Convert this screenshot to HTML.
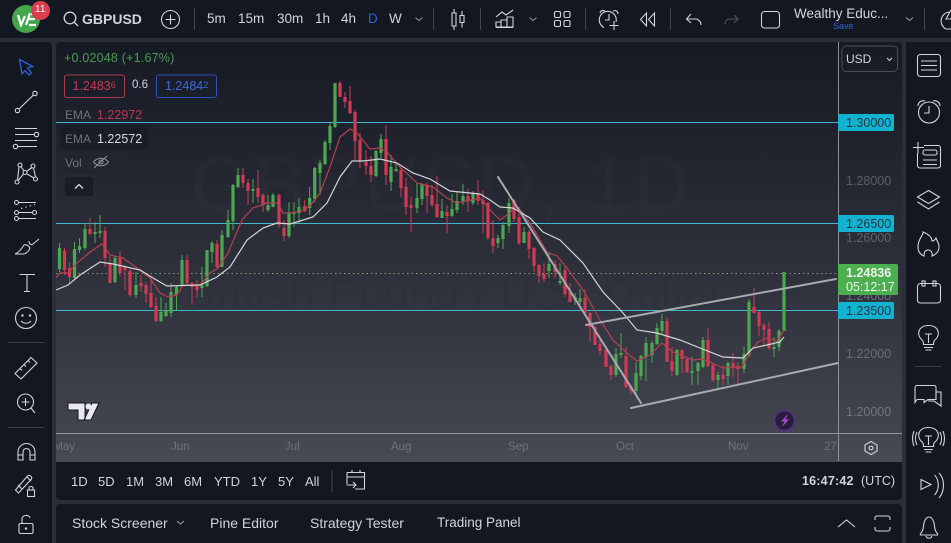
<!DOCTYPE html>
<html><head><meta charset="utf-8"><style>
html,body{margin:0;padding:0;background:#2a2e39;}
body{width:951px;height:543px;overflow:hidden;position:relative;font-family:"Liberation Sans",sans-serif;color:#d1d4dc;filter:blur(.35px);}
.b{position:absolute;background:#131722;}
.t{position:absolute;white-space:nowrap;line-height:1;}
svg{position:absolute;left:0;top:0;}
.i{fill:none;stroke:#d1d4dc;stroke-width:1.1;}
</style></head><body>
<div class="b" style="left:0;top:0;width:951px;height:38px"></div>
<div class="b" style="left:0;top:42px;width:52px;height:501px;border-radius:0 4px 0 0"></div>
<div class="b" style="left:906px;top:42px;width:45px;height:501px"></div>
<div style="position:absolute;left:56px;top:42px;width:846px;height:420px;background:linear-gradient(#161a25 0,#262933 158px,#383a45 318px,#42444f 388px,#484a55 420px);border-radius:4px 4px 0 0"></div>
<div class="b" style="left:56px;top:462px;width:846px;height:38px;border-radius:0 0 4px 4px"></div>
<div class="b" style="left:56px;top:504px;width:846px;height:39px;border-radius:4px 4px 0 0"></div>

<!-- watermark -->
<div class="t" style="left:190px;top:145px;font-size:78px;color:#fff;opacity:.012;letter-spacing:3px">GBPUSD, 1D</div>
<div class="t" style="left:186px;top:272px;font-size:44px;color:#000;opacity:.035;letter-spacing:1px">British Pound / U.S. Dollar</div>

<svg width="951" height="543" viewBox="0 0 951 543">
<!-- levels -->
<g stroke="#3fb6cb" stroke-width="1" fill="none">
<path d="M56 122.500H838M56 223.500H838M56 310.500H838"/>
</g>
<path d="M56 273.500H838" stroke="#7f9c75" stroke-width="1" stroke-dasharray="1.500 3" fill="none"/>
<path d="M838.500 42V461M56 433.500H902" stroke="#a3a6af" stroke-width="1" fill="none" opacity=".8"/>

<!-- red wicks+bodies -->
<g fill="none" stroke="#d03a55">
<path stroke-width="1" d="M64.500 248V275M69.500 263V283M90 218V235M105 227V267M110 256V283M120 251V277M125 265V290M130 268V297M141 275V292M146 282V303M151 277V308M156 297V322M187 255V285M192 282V305M197 280V297M217 240V268M243 168V188M248 179V205M258 170V203M263 193V212M279 194V228M284 220V241M304.700 200V212M340 81V97M345 92V108M350 86V114M355 110V160M360 133V168M366 150V175M371 156V182M386 125V185M401 168V197M406 178V215M411 197V232M427 183V213M432 185V207M437 176V218M447 205V233M468 189V212M478 180V205M483 190V233M488 202V240M493 220V253M514 199V222M519 207V245M529 230V259M534 247V272M539 264V283M544 263V282M555 260V278M565 265V297M570 283V302M585 289V313M590 312V342M595 325V345M600 338V355M606 348V367M611 365V380M626 347V388M631 385V395M667 317V362M672 347V376M682 349V373M687 358V373M708 328V367M713 363V382M723 365V385M733 353V377M738 362V384M754 288V314M759 311V336M764 323V345M769 322V350"/>
<path stroke-width="3.200" d="M64.500 251V270M69.500 268V277M90 229V234M105 231V258M110 264V283M120 258V273M125 267V270M130 271V295M141 283V286M146 285V294M151 293V307M156 306V321M187 260V283M192 283V287M197 285V290M217 244V267M243 175V183M248 183V191M258 188V197M263 195V205M279 195V225M284 228V236M304.700 206V211M340 83V97M345 97V102M350 101V113M355 112V141M360 140V161M366 162V166M371 166V175M386 139V175M401 170V188M406 187V207M411 205V208M427 185V196M432 195V205M437 204V217M447 212V216M468 196V201M478 194V201M483 200V204M488 203V238M493 238V246M514 200V219M519 217V243M529 232V249M534 248V266M539 265V276M544 274V279M555 264V272M565 270V294M570 292V302M585 298V313M590 313V327M595 327V345M600 344V351M606 350V367M611 366V375M626 356V387M631 386V391M667 321V362M672 361V371M682 350V359M687 359V372M708 340V366M713 365V380M723 375V379M733 363V367M738 366V369M754 307V313M759 312V326M764 325V330M769 329V348"/>
</g>
<!-- green wicks+bodies -->
<g fill="none" stroke="#4da752">
<path stroke-width="1" d="M59.500 243V272M74.500 242V280M79.500 238V253M85 223V250M95 222V243M100 215V238M115 256V283M136 272V298M161 297V322M166 303V317M171 283V317M176.500 285V310M182 255V287M202 267V297M207 250V287M212 241V263M222 230V267M228 210V238M233 184V230M238 168V188M253 179V203M268 195V212M273 193V207M289 202V238M294 202V227M299 198V223M309.700 187V215M314.700 167V202M320 160V195M325 140V165M330 123V150M335 83V128M376 150V177M381 134V158M391 155V191M396 162V172M417 183V213M422 183V205M442 199V218M452 194V217M457 192V213M463 184V205M473 191V205M498 235V248M503 222V249M509 198V233M524 227V243M549 253V278M560 263V285M575 293V305M580 289V305M616 348V377M621 333V358M636 362V397M641 355V380M646 337V381M652 341V363M657 323V345M662 314V335M677 349V376M692 357V385M698 362V385M703 337V368M718 372V389M728 362V385M744 347V373M749 299V357M774 337V357M779 329V351M784 272V331"/>
<path stroke-width="3.200" d="M59.500 248V269M74.500 249V278M79.500 246V250M85 229V248M95 232V234M100 231V233M115 258V282M136 285V295M161 312V321M166 310V316M171 292V313M176.500 287V295M182 260V286M202 285V288M207 250V286M212 243V252M222 235V267M228 220V237M233 185V221M238 175V187M253 189V191M268 205V210M273 195V207M289 212V236M294 212V214M299 207V213M309.700 198V208M314.700 168V199M320 163V173M325 142V164M330 126V143M335 83V127M376 151V176M381 139V153M391 167V182M396 169V171M417 198V208M422 184V199M442 211V218M452 209V216M457 201V210M463 196V201M473 193V203M498 238V243M503 225V239M509 203V226M524 232V243M549 264V271M560 281V283M575 297V300M580 298V302M616 354V375M621 353V355M636 373V391M641 356V376M646 343V357M652 343V355M657 328V344M662 321V331M677 350V375M692 371V373M698 363V371M703 340V367M718 375V380M728 363V376M744 354V369M749 302V355M774 347V349M779 331V347M784 272V331"/>
</g>
<!-- EMA lines -->
<path fill="none" stroke="#b3404f" stroke-width="1.200" d="M56 278L60 273L68 273L77 263L90 252L102 244L105 248L110 255L123 258L137 268L150 278L160 293L168 297L177 295L183 285L200 285L210 273L218 268L228 253L242 220L253 208L267 203L277 203L283 213L300 212L310 206L320 193L330 167L340 137L350 129L357 133L370 149L380 148L387 152L400 167L417 183L433 187L447 198L457 203L480 198L490 210L500 220L510 213L515 205L523 213L533 228L547 252L557 256L567 268L583 290L600 320L613 340L627 353L637 361L650 355L662 343L673 352L693 360L702 359L710 362L723 368L742 367L750 352L758 342L767 338L777 341L784 330"/>
<path fill="none" stroke="#d3d4d8" stroke-width="1.200" d="M56 290L68 285L80 275L100 262L113 264L140 270L153 278L167 286L200 285L217 277L230 267L247 240L263 228L277 223L290 224L300 221L313 217L327 203L340 177L352 161L363 161L380 159L397 163L413 173L430 179L450 191L480 194L490 200L500 207L513 208L530 218L543 232L560 240L583 263L603 292L623 313L637 330L657 333L670 337L680 340L700 348L723 357L743 358L753 348L767 345L780 342L784 337"/>
<!-- trend lines -->
<g stroke="#a9aab0" stroke-width="2" fill="none" stroke-linecap="round">
<path d="M498 177L641 403M586 325L836 279M631 408L838 363"/>
</g>

<!-- price labels -->
<rect x="838" y="114" width="56" height="17" rx="1.500" fill="#11b3d0"/>
<rect x="838" y="215" width="56" height="17" rx="1.500" fill="#11b3d0"/>
<rect x="838" y="302" width="56" height="17" rx="1.500" fill="#11b3d0"/>
<rect x="838" y="264" width="60" height="31" rx="1.500" fill="#4caf50"/>
<rect x="842" y="46" width="55.500" height="25.500" rx="4" fill="none" stroke="#4a4d58"/>

<!-- top bar icons -->
<circle cx="26" cy="19" r="14" fill="#43a648"/>
<path d="M18 15l3 10 4-9M26 25l4-12M29 19h6M29 25h7M31 14h6" fill="none" stroke="#fff" stroke-width="2.200"/>
<circle cx="40.500" cy="10.500" r="9.500" fill="#dc3d4e"/>
<circle cx="70" cy="18" r="5.800" class="i" style="stroke-width:1.300"/><path d="M74.200 22.200L78 26" class="i" style="stroke-width:1.300"/>
<circle cx="170.500" cy="19.500" r="9" class="i"/><path d="M170.500 14.500v10M165.500 19.500h10" class="i"/>
<path d="M194.500 8V30M433.500 8V30M480.500 8V30M585.500 8V30M670.500 8V30M924.500 8V30" stroke="#434651"/>
<path d="M415.500 17.500l3.500 3 3.500-3" class="i" style="stroke:#8a8d96"/>
<path d="M452 13h4v13h-4zM454 9v4M454 26v4M460 15.500h4v7h-4zM462 11v4.500M462 22.500v5" class="i"/>
<path d="M496 17l6-5 4 3 7-5M496 27h5v-5h-5zM501 27v-7h6v7zM507 27V17h6v10zM496 27.500h17" class="i"/>
<path d="M529.500 17.500l3.500 3 3.500-3" class="i" style="stroke:#8a8d96"/>
<rect x="554.500" y="11.500" width="6" height="6" rx="1.500" class="i"/><rect x="564" y="11.500" width="6" height="6" rx="1.500" class="i"/><rect x="554.500" y="20.500" width="6" height="6" rx="1.500" class="i"/><rect x="564" y="20.500" width="6" height="6" rx="1.500" class="i"/>
<path d="M604 27.500A8.500 8.500 0 1 1 616 22M609 14v6h-4M600 13c1-3 3-3 5-2M613 11c3-1 5 0 5 3M614 21v9M609.500 25.500h9" class="i"/>
<path d="M646.500 13l-6 6.500 6 6.500zM654.500 13l-6 6.500 6 6.500z" class="i"/>
<path d="M687 19h8c4 0 6 3 6 6M691 14l-4.500 5 4.500 4" class="i"/>
<path d="M738 19h-8c-4 0-5 3-5 5M734 15l4 4-4 4" class="i" style="stroke:#50535e"/>
<rect x="761.500" y="11.500" width="18" height="16.500" rx="3" class="i"/>
<path d="M906 17.500l3.500 3 3.500-3" class="i" style="stroke:#9598a1"/>
<path d="M950 12a9 9 0 0 0-4 17l5 0M951 10l-5 9h5" class="i"/>

<!-- left bar icons -->
<path d="M19.500 59.500l2.500 14.500 3-3.500 4 4.500 2.500-2-3.800-5 5-1.500z" fill="none" stroke="#2f5fd8" stroke-width="1.300"/>
<g class="i">
<circle cx="17.500" cy="110.500" r="2.200"/><circle cx="35" cy="93.500" r="2.200"/><path d="M19.500 108.500L33.500 95"/>
<path d="M15 128.500H37M15 134.500H34M15 140.500H37M18 146.500H37"/><circle cx="36.500" cy="134.500" r="2.200"/><circle cx="15.500" cy="146.500" r="2.200"/>
<circle cx="20" cy="165" r="2"/><circle cx="33" cy="166" r="2"/><circle cx="25" cy="172.500" r="2"/><circle cx="17" cy="182" r="2"/><circle cx="35.500" cy="179" r="2"/><path d="M19 167l-1.500 13M21 166.500l3 4.500M27 171l5-3.500M27 174l7 4M23.500 174l-5 6M33.500 168l2 9"/>
<circle cx="16.500" cy="202.500" r="2"/><circle cx="16.500" cy="212.500" r="2"/><circle cx="16.500" cy="218.500" r="2"/><circle cx="34.500" cy="212.500" r="2"/><path d="M19 202.500H36M19 212.500H32M19 218.500H36"/><path d="M21 208.500l14-4" stroke-dasharray="1.500 3"/>
<path d="M15 254c4-1 7-6 9-9 2-1 5 1 6 3-1 3-3 5-6 6zM29 241c0 4 3 4 4 3l6-5"/>
<path d="M19.500 274.500H35M27 274.500V291.500M24 291.500h6"/>
<circle cx="26" cy="318" r="10.500"/><circle cx="22.500" cy="315.500" r=".7"/><circle cx="30" cy="315.500" r=".7"/><path d="M21 321c3 3 7 3 10 0"/>
<path d="M15 373.500L31 357.500l6 5.500-16 16zM20 368.500l2 2M24 364.500l2 2M28 360.500l2 2"/>
<circle cx="25.500" cy="402" r="8"/><path d="M25.500 398v8M21.500 402h8M31 408l4 5"/>
<path d="M18 460v-8a8.500 8.500 0 0 1 17 0v8h-5v-8a3 3 0 0 0-7 0v8zM18 455h5M30 455h5"/>
<path d="M15.500 490l3 3 13-14c1-2-2-5-4-3zM18 485l4 4M27 477l4 4"/><rect x="27.500" y="490" width="7" height="6.500"/><path d="M29 490v-2c0-2 4-2 4 0v2"/>
<rect x="19" y="523.500" width="14" height="10" rx="1.500"/><path d="M22 523v-4c0-4 7-5 8-1"/><circle cx="26" cy="528.500" r=".7"/>
</g>
<path d="M8 342.500H44M8 427.500H44M915 366.500H942" stroke="#3a3d48"/>
<rect x="64" y="176" width="30" height="21" rx="3" fill="#191d27" stroke="#2c303a"/>
<path d="M75 188.500l4-4 4 4" fill="none" stroke="#d8dade" stroke-width="1.300"/>

<!-- right bar icons -->
<g class="i">
<rect x="917.500" y="54.500" width="23" height="22" rx="3"/><path d="M921 61h16M921 65.500h16M921 70h16"/>
<circle cx="929" cy="112.500" r="10.500"/><path d="M929 106v7h-5M918 106c0-4 4-6 7-5M940 106c0-4-4-6-7-5"/>
<path d="M918 142v11M913 147.500h11"/>
<path d="M924 145.500h14a2.500 2.500 0 0 1 2.500 2.500v17.500a2.500 2.500 0 0 1-2.500 2.500h-18a2.500 2.500 0 0 1-2.500-2.500V153"/>
<rect x="923" y="150" width="14" height="5" rx="2"/><path d="M923 160h14M923 164.500h14"/>
<path d="M928.500 190.500l11 6.500-11 6.500-11-6.500zM917.500 202l11 7 11-7"/>
<path d="M923 232c1 3-5 6-5 15 0 5 3 8 6 9 0-3 1-6 4-6s5 3 4 6c3-1 7-4 7-9 0-4-2-6-3-9-1 2-2 3-4 3 0-4-4-7-9-9z"/>
<rect x="917.500" y="283.500" width="23" height="19.500" rx="3"/><rect x="922" y="281" width="3" height="5"/><rect x="933" y="281" width="3" height="5"/>
<path d="M922.500 340.500c-7-6-4-15 6-15s13 9 6 15c-1 1-1 2-1 4h-10c0-2 0-3-1-4zM924 347.500h9M925.500 350h6M925 334h7M928.500 334v9"/>
<path d="M919 385.500h15a2 2 0 0 1 2 2v12l-8 0-4 3v-3h-7l-2 3v-15a2 2 0 0 1 2-2zM936 392h5v14l-7-5h-6"/>
<path d="M922.500 442.500c-7-6-4-15 6-15s13 9 6 15c-1 1-1 2-1 4h-10c0-2 0-3-1-4zM924 449.500h9M925.500 452h6M925 436h7M928.500 436v9"/><path d="M917 432c-2 4-2 9 0 13M914 431c-2 5-2 10 0 15M940 432c2 4 2 9 0 13M943 431c2 5 2 10 0 15"/>
<path d="M921 479.500l10 5-10 5zM934.500 475c5 5 5 15 0 20M939 473c6 6 6 18 0 25"/>
<path d="M921 533c3-3 2-6 3-10s3-6 5-6 4 2 5 6 0 7 3 10c1 1 1 2 0 2h-16c-1 0-1-1 0-2zM926 536c1 3 5 3 6 0"/>
</g>

<!-- pills -->
<rect x="64.500" y="75" width="60" height="22.500" rx="2.500" fill="none" stroke="#a53c4a"/>
<rect x="156.500" y="75" width="60" height="22.500" rx="2.500" fill="none" stroke="#2d55b3"/>
<!-- hide eye -->
<path d="M93.500 162c4-5 11-5 15 0-4 5-11 5-15 0zM94 168l13-12" class="i" style="stroke:#8a8d96"/><circle cx="101" cy="162" r="2" class="i" style="stroke:#8a8d96"/>
<!-- TV logo -->
<path d="M68 403H85V420H78V410H68zM92 403H99L91 420H84z" fill="#e8e9ee" stroke="#161821" stroke-width="1"/><circle cx="88.500" cy="406.500" r="3" fill="#e8e9ee"/>
<!-- flash badge -->
<circle cx="784.500" cy="420.500" r="10" fill="#2a1e3e" stroke="#5a2e86" stroke-width="1.500"/>
<path d="M788 414l-7 7.500h3.500L782 427l7-7.500h-3.500z" fill="#a14fc9"/>
<!-- gear -->
<path d="M871 441.500l6 3.500v6l-6 3.500-6-3.500v-6z" fill="none" stroke="#c8cad0" stroke-width="1.200"/><circle cx="871" cy="448" r="1.800" fill="none" stroke="#c8cad0" stroke-width="1.200"/>
<!-- date icon -->
<path d="M347 472.500h17.500v16.500H355M347 484v-11.500M347 477h17.500M352 470v3M360 470v3M346.500 485H356M353 482l3 3-3 3" class="i"/>
<path d="M332 470V492" stroke="#434651"/>
<!-- bottom icons -->
<path d="M177 521l3.500 3 3.500-3" class="i" style="stroke:#9598a1"/>
<path d="M838 527l8.500-7 8.500 7" class="i"/>
<path d="M875 520v-2a2 2 0 0 1 2-2h11a2 2 0 0 1 2 2v2M875 527v2a2 2 0 0 0 2 2h11a2 2 0 0 0 2-2v-2" class="i"/>
</svg>

<!-- text -->
<div class="t" style="left:35px;top:5px;font-size:10px;color:#fff;width:11px">11</div>
<div class="t" style="left:82px;top:12px;font-size:14px;font-weight:bold;color:#d1d4dc">GBPUSD</div>
<div class="t" style="left:207px;top:12px;font-size:13.500px">5m</div>
<div class="t" style="left:238px;top:12px;font-size:13.500px">15m</div>
<div class="t" style="left:277px;top:12px;font-size:13.500px">30m</div>
<div class="t" style="left:315px;top:12px;font-size:13.500px">1h</div>
<div class="t" style="left:341px;top:12px;font-size:13.500px">4h</div>
<div class="t" style="left:368px;top:12px;font-size:13.500px;color:#2f5fd8">D</div>
<div class="t" style="left:389px;top:12px;font-size:13.500px">W</div>
<div class="t" style="left:794px;top:7px;font-size:13.500px">Wealthy Educ...</div>
<div class="t" style="left:833px;top:22px;font-size:9px;color:#2f5fd8">Save</div>

<div class="t" style="left:64px;top:52px;font-size:12.500px;color:#4a9b50;letter-spacing:.2px">+0.02048 (+1.67%)</div>
<div class="t" style="left:72.500px;top:80px;font-size:12.500px;color:#c9394f">1.2483<span style="font-size:9px;vertical-align:2px">6</span></div>
<div class="t" style="left:132px;top:80px;font-size:11.500px;color:#d1d4dc">0.6</div>
<div class="t" style="left:165px;top:80px;font-size:12.500px;color:#3a6ad8">1.2484<span style="font-size:9px;vertical-align:2px">2</span></div>
<div class="t" style="left:65px;top:109px;font-size:12px;color:#6e7079">EMA</div>
<div class="t" style="left:97px;top:109px;font-size:12.500px;color:#b83a4c">1.22972</div>
<div style="position:absolute;left:60px;top:126px;width:88px;height:24px;background:rgba(19,23,34,.5)"></div>
<div class="t" style="left:65px;top:133px;font-size:12px;color:#6e7079">EMA</div>
<div class="t" style="left:97px;top:133px;font-size:12.500px;color:#d8d9de">1.22572</div>
<div class="t" style="left:65px;top:157px;font-size:12px;color:#6e7079">Vol</div>

<div class="t" style="left:846px;top:52.500px;font-size:12px">USD</div>
<svg width="951" height="543"><path d="M887 58l2.500 2.500 2.500-2.500" fill="none" stroke="#d1d4dc"/></svg>
<div class="t" style="left:846px;top:116.500px;font-size:12.500px;color:#20363f">1.30000</div>
<div class="t" style="left:846px;top:174.500px;font-size:12.500px;color:#5b5e68">1.28000</div>
<div class="t" style="left:846px;top:217.500px;font-size:12.500px;color:#20363f">1.26500</div>
<div class="t" style="left:846px;top:232px;font-size:12.500px;color:#5f626c">1.26000</div>
<div class="t" style="left:846px;top:295px;height:6px;overflow:hidden;font-size:12.500px;color:#6a6d76"><span style="position:relative;top:-5px">1.24000</span></div>
<div class="t" style="left:846px;top:267px;font-size:12.500px;font-weight:bold;color:#eef5ec">1.24836</div>
<div class="t" style="left:846px;top:281px;font-size:12.500px;color:#eef5ec">05:12:17</div>
<div class="t" style="left:846px;top:304.500px;font-size:12.500px;color:#20363f">1.23500</div>
<div class="t" style="left:846px;top:347.500px;font-size:12.500px;color:#6a6d76">1.22000</div>
<div class="t" style="left:846px;top:405.500px;font-size:12.500px;color:#71747c">1.20000</div>

<div class="t" style="left:56px;top:441.500px;width:19px;overflow:hidden;font-size:11.500px;color:#6f717a;direction:rtl">May</div>
<div class="t" style="left:171px;top:441.500px;font-size:11.500px;color:#6f717a">Jun</div>
<div class="t" style="left:285px;top:441.500px;font-size:11.500px;color:#6f717a">Jul</div>
<div class="t" style="left:391px;top:441.500px;font-size:11.500px;color:#6f717a">Aug</div>
<div class="t" style="left:508px;top:441.500px;font-size:11.500px;color:#6f717a">Sep</div>
<div class="t" style="left:616px;top:441.500px;font-size:11.500px;color:#6f717a">Oct</div>
<div class="t" style="left:728px;top:441.500px;font-size:11.500px;color:#6f717a">Nov</div>
<div class="t" style="left:824px;top:441.500px;font-size:11.500px;color:#6f717a">27</div>

<div class="t" style="left:71px;top:475px;font-size:13px">1D</div>
<div class="t" style="left:98px;top:475px;font-size:13px">5D</div>
<div class="t" style="left:126px;top:475px;font-size:13px">1M</div>
<div class="t" style="left:155px;top:475px;font-size:13px">3M</div>
<div class="t" style="left:184px;top:475px;font-size:13px">6M</div>
<div class="t" style="left:214px;top:475px;font-size:13px">YTD</div>
<div class="t" style="left:251px;top:475px;font-size:13px">1Y</div>
<div class="t" style="left:278px;top:475px;font-size:13px">5Y</div>
<div class="t" style="left:305px;top:475px;font-size:13px">All</div>
<div class="t" style="left:802px;top:475px;font-size:12.500px;font-weight:bold;letter-spacing:.2px">16:47:42</div>
<div class="t" style="left:861px;top:475px;font-size:12.500px">(UTC)</div>

<div class="t" style="left:72px;top:516px;font-size:14px">Stock Screener</div>
<div class="t" style="left:210px;top:516px;font-size:14px">Pine Editor</div>
<div class="t" style="left:310px;top:516px;font-size:14px">Strategy Tester</div>
<div class="t" style="left:437px;top:516px;font-size:13.500px">Trading Panel</div>
</body></html>
